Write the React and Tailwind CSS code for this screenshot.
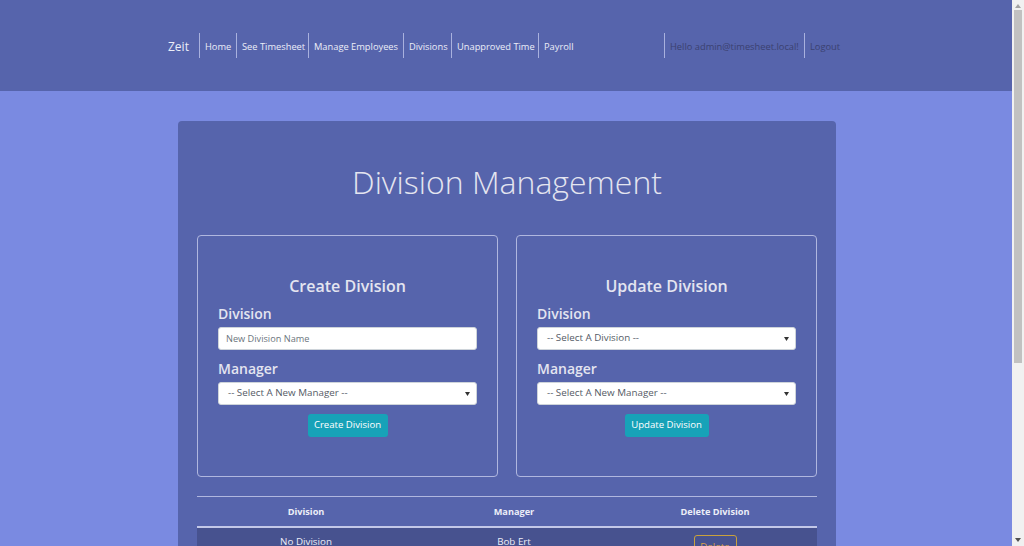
import React from "react";

function NavItem({ w, children, dark }) {
  return (
    <div className={`flex items-center h-[25px] border-l border-[#a9b1de] pl-[5px] ${w}`}>
      <span className={`whitespace-nowrap text-[9.3px] leading-[12px] pt-[3px] ${dark ? "text-[#3b4170]" : "text-[#eceef8]"}`}>{children}</span>
    </div>
  );
}

function Caret() {
  return (
    <svg width="5" height="4" viewBox="0 0 5 4" className="absolute right-[6px] top-[9px]">
      <path d="M0 0 L5 0 L2.5 4 Z" fill="#333" />
    </svg>
  );
}

function Select({ text }) {
  return (
    <div className="relative h-[23px] w-full bg-white rounded-[3px] border border-[#ced4da] flex items-center pl-[9px]">
      <span className="text-[9.8px] text-[#555b66]">{text}</span>
      <Caret />
    </div>
  );
}

function Panel({ title, children, button, bw }) {
  return (
    <div className="w-[301px] h-[242px] border border-[#b0b7df] rounded-[4px] pt-[38px] px-[20px]">
      <div className="text-center text-[16px] leading-[24px] font-semibold text-[#e4e5f0]">{title}</div>
      {children}
      <div className="flex justify-center mt-[9px]">
        <div className={`h-[23px] bg-[#17a2b8] rounded-[3px] flex items-center justify-center text-white text-[9.6px] ${bw}`}>{button}</div>
      </div>
    </div>
  );
}

function Label({ children, first }) {
  return (
    <div className={`text-[14px] leading-[20px] font-semibold text-[#e4e5f0] mb-[3px] ${first ? "mt-[6px]" : "mt-[9px]"}`}>{children}</div>
  );
}

export default function App() {
  return (
    <div className="w-[1024px] h-[546px] overflow-hidden flex font-['Open_Sans','Noto_Sans',sans-serif]">
      <div className="w-[1012px] h-[546px] overflow-hidden bg-[#7a8ae1]">
        <nav className="h-[91px] bg-[#5664ac] flex items-center">
          <div className="ml-[168px] w-[676px] flex items-center justify-between">
            <div className="flex items-center">
              <span className="text-[12px] leading-[16px] pt-[2px] text-[#eceef8] w-[31px]">Zeit</span>
              <NavItem w="w-[37px]">Home</NavItem>
              <NavItem w="w-[72px]">See Timesheet</NavItem>
              <NavItem w="w-[95px]">Manage Employees</NavItem>
              <NavItem w="w-[48px]">Divisions</NavItem>
              <NavItem w="w-[87px]">Unapproved Time</NavItem>
              <NavItem w="w-[40px]">Payroll</NavItem>
            </div>
            <div className="flex items-center">
              <NavItem w="w-[140px]" dark>Hello admin@timesheet.local!</NavItem>
              <NavItem w="w-[40px]" dark>Logout</NavItem>
            </div>
          </div>
        </nav>
        <div className="pt-[30px] pl-[178px]">
          <div className="w-[658px] h-[500px] bg-[#5664ac] rounded-[4px] px-[19px] pt-[36px]">
            <h1 className="text-center text-[32px] leading-[50px] font-light text-[#e4e5f0]">Division Management</h1>
            <div className="mt-[28px] flex justify-between">
              <Panel title="Create Division" button="Create Division" bw="w-[80px]">
                <Label first>Division</Label>
                <div className="h-[23px] w-full bg-white rounded-[3px] border border-[#ced4da] flex items-center pl-[7px]">
                  <span className="text-[9.2px] text-[#6c757d]">New Division Name</span>
                </div>
                <Label>Manager</Label>
                <Select text="-- Select A New Manager --" />
              </Panel>
              <Panel title="Update Division" button="Update Division" bw="w-[84px]">
                <Label first>Division</Label>
                <Select text="-- Select A Division --" />
                <Label>Manager</Label>
                <Select text="-- Select A New Manager --" />
              </Panel>
            </div>
            <div className="mt-[19px] border-t border-[#b0b7df]">
              <div className="grid grid-cols-[218px_198px_204px] h-[31px] items-center border-b-2 border-[#c3c8e8] text-[9.2px] font-bold text-[#eceef8]">
                <div className="text-center">Division</div>
                <div className="text-center">Manager</div>
                <div className="text-center">Delete Division</div>
              </div>
              <div className="grid grid-cols-[218px_198px_204px] h-[40px] bg-[#47528f] text-[9.8px] text-[#eceef8] pt-[7px]">
                <div className="text-center leading-[14px]">No Division</div>
                <div className="text-center leading-[14px]">Bob Ert</div>
                <div className="flex justify-center">
                  <div className="h-[24px] w-[43px] border border-[#c9a13c] rounded-[3px] text-[#d9a04a] text-[9.8px] flex items-center justify-center">Delete</div>
                </div>
              </div>
            </div>
          </div>
        </div>
      </div>
      <div className="w-[12px] h-[546px] bg-[#f1f1f1] flex flex-col items-center">
        <svg width="6" height="4" viewBox="0 0 6 4" className="mt-[4px]"><path d="M0 4 L6 4 L3 0 Z" fill="#a3a3a3" /></svg>
        <div className="mt-[2px] w-[8px] h-[353px] bg-[#c1c1c1]" />
        <div className="flex-1" />
        <svg width="6" height="4" viewBox="0 0 6 4" className="mb-[4px]"><path d="M0 0 L6 0 L3 4 Z" fill="#505050" /></svg>
      </div>
    </div>
  );
}
